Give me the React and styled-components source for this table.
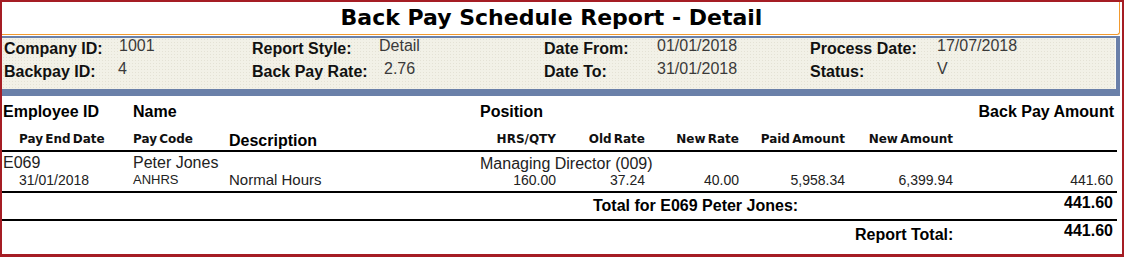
import styled, { createGlobalStyle } from "styled-components";

const GlobalStyle = createGlobalStyle`
  html, body {
    margin: 0;
    padding: 0;
    background: #ffffff;
  }
  body {
    font-family: "Liberation Sans", Arial, sans-serif;
    color: #000;
  }
`;

// column template shared by every table row
const COLS = "130px 96px 251px 76px 89px 94px 106px 108px 1fr";

const info = [
  [
    { label: "Company ID:", value: "1001" },
    { label: "Report Style:", value: "Detail" },
    { label: "Date From:", value: "01/01/2018" },
    { label: "Process Date:", value: "17/07/2018" },
  ],
  [
    { label: "Backpay ID:", value: "4", shift: -1 },
    { label: "Back Pay Rate:", value: "2.76", shift: 5 },
    { label: "Date To:", value: "31/01/2018" },
    { label: "Status:", value: "V" },
  ],
];

const subHeads = ["HRS/QTY", "Old Rate", "New Rate", "Paid Amount", "New Amount"];
const amounts = ["160.00", "37.24", "40.00", "5,958.34", "6,399.94"];

const App = () => {
  return (
    <>
      <GlobalStyle />
      <S_Frame>
        <S_TitleBox>
          <S_Title>Back Pay Schedule Report - Detail</S_Title>
        </S_TitleBox>

        <S_InfoPanel>
          <S_InfoGrid>
            {info.map((row) =>
              row.map((item) => [
                <S_InfoLabel key={item.label}>{item.label}</S_InfoLabel>,
                <S_InfoValue key={item.label + "v"} $shift={item.shift || 0}>
                  {item.value}
                </S_InfoValue>,
              ])
            )}
          </S_InfoGrid>
        </S_InfoPanel>

        <S_Table>
          <S_HeadRow>
            <S_ColHead>Employee ID</S_ColHead>
            <S_ColHead>Name</S_ColHead>
            <span />
            <S_ColHead $span="4 / 9">Position</S_ColHead>
            <S_ColHead $right>Back Pay Amount</S_ColHead>
          </S_HeadRow>

          <S_SubHeadRow>
            <S_SubHead $indent={16}>Pay End Date</S_SubHead>
            <S_SubHead>Pay Code</S_SubHead>
            <S_Description>Description</S_Description>
            {subHeads.map((h) => (
              <S_SubHead key={h} $right>
                {h}
              </S_SubHead>
            ))}
          </S_SubHeadRow>

          <S_EmpRow>
            <S_EmpCell>E069</S_EmpCell>
            <S_EmpCell>Peter Jones</S_EmpCell>
            <span />
            <S_EmpCell $span="4 / 9" $low>
              Managing Director (009)
            </S_EmpCell>
          </S_EmpRow>

          <S_DetailRow>
            <S_DetailCell $indent={16}>31/01/2018</S_DetailCell>
            <S_DetailCell $small>ANHRS</S_DetailCell>
            <S_DetailCell $big>Normal Hours</S_DetailCell>
            {amounts.map((a) => (
              <S_DetailCell key={a} $right>
                {a}
              </S_DetailCell>
            ))}
            <S_DetailCell $right>441.60</S_DetailCell>
          </S_DetailRow>

          <S_TotalRow>
            <S_TotalLabel $start={591}>Total for E069 Peter Jones:</S_TotalLabel>
            <S_TotalAmount>441.60</S_TotalAmount>
          </S_TotalRow>

          <S_TotalRow $last>
            <S_TotalLabel $start={853}>Report Total:</S_TotalLabel>
            <S_TotalAmount>441.60</S_TotalAmount>
          </S_TotalRow>
        </S_Table>
      </S_Frame>
    </>
  );
};

export default App;

// 바깥 테두리
const S_Frame = styled.div`
  box-sizing: border-box;
  width: 1124px;
  height: 257px;
  border: 2px solid #a51d24;
  border-bottom-width: 3px;
  display: flex;
  flex-direction: column;
  background: #fff;
`;

const S_TitleBox = styled.div`
  height: 32px;
  margin-right: 2px;
  margin-bottom: 1px;
  border-bottom: 1px solid #f29a2e;
  border-right: 1px solid #f29a2e;
  border-bottom-right-radius: 3px;
  display: flex;
  align-items: center;
  justify-content: center;
  padding-right: 18px;
`;

const S_Title = styled.div`
  font-family: "DejaVu Sans", Verdana, sans-serif;
  font-weight: bold;
  font-size: 22px;
  line-height: 32px;
  color: #000;
`;

const S_InfoPanel = styled.div`
  background: #6a80a9;
  margin-right: 2px;
  padding: 2px 4px 7px 0;
`;

const S_InfoGrid = styled.div`
  box-sizing: border-box;
  height: 51px;
  background-color: #f2f1e7;
  background-image: radial-gradient(#e4e2d5 0.6px, transparent 0.8px);
  background-size: 3px 3px;
  border-right: 1px solid #fbfaf4;
  padding-left: 2px;
  display: grid;
  grid-template-columns: 115px 133px 127px 165px 113px 153px 127px 1fr;
  grid-template-rows: 22px 24px;
  align-items: center;
`;

const S_InfoLabel = styled.div`
  font-size: 16px;
  font-weight: bold;
  color: #111;
  white-space: nowrap;
`;

const S_InfoValue = styled.div`
  font-size: 16px;
  color: #3a3a3a;
  margin-bottom: 6px;
  margin-left: ${(p) => p.$shift}px;
  white-space: nowrap;
`;

const S_Table = styled.div`
  flex: 1;
  display: flex;
  flex-direction: column;
  margin-right: 5px;
`;

const S_GridRow = styled.div`
  display: grid;
  grid-template-columns: ${COLS};
  padding: 0 4px 0 1px;
  white-space: nowrap;
`;

const S_HeadRow = styled(S_GridRow)`
  height: 32px;
  align-items: center;
`;

const S_ColHead = styled.div`
  font-size: 16px;
  font-weight: bold;
  grid-column: ${(p) => p.$span || "auto"};
  text-align: ${(p) => (p.$right ? "right" : "left")};
  margin-right: ${(p) => (p.$right ? "-1px" : "0")};
`;

const S_SubHeadRow = styled(S_GridRow)`
  height: 22px;
  align-items: center;
  border-bottom: 2px solid #000;
`;

const S_SubHead = styled.div`
  font-family: "DejaVu Sans", Verdana, sans-serif;
  font-weight: bold;
  font-size: 12px;
  word-spacing: -2px;
  padding-left: ${(p) => p.$indent || 0}px;
  text-align: ${(p) => (p.$right ? "right" : "left")};
  color: #111;
`;

const S_Description = styled.div`
  font-size: 16px;
  font-weight: bold;
  padding-top: 3px;
`;

const S_EmpRow = styled(S_GridRow)`
  height: 18px;
  align-items: center;
`;

const S_EmpCell = styled.div`
  font-size: 16px;
  color: #222;
  grid-column: ${(p) => p.$span || "auto"};
  padding-top: ${(p) => (p.$low ? "3px" : "0")};
`;

const S_DetailRow = styled(S_GridRow)`
  height: 23px;
  padding-top: 1px;
  box-sizing: border-box;
  align-items: start;
  border-bottom: 2px solid #000;
`;

const S_DetailCell = styled.div`
  font-size: ${(p) => (p.$big ? "15px" : p.$small ? "13px" : "14px")};
  line-height: 18px;
  color: #222;
  padding-left: ${(p) => p.$indent || 0}px;
  text-align: ${(p) => (p.$right ? "right" : "left")};
`;

const S_TotalRow = styled.div`
  display: flex;
  align-items: center;
  padding: 0 4px 0 0;
  height: ${(p) => (p.$last ? "auto" : "26px")};
  flex: ${(p) => (p.$last ? 1 : "none")};
  max-height: ${(p) => (p.$last ? "27px" : "none")};
  border-bottom: ${(p) => (p.$last ? "none" : "2px solid #000")};
  white-space: nowrap;
`;

const S_TotalLabel = styled.div`
  font-size: 16px;
  font-weight: bold;
  padding-left: ${(p) => p.$start}px;
`;

const S_TotalAmount = styled.div`
  font-size: 16px;
  font-weight: bold;
  margin-left: auto;
  margin-bottom: 7px;
`;
